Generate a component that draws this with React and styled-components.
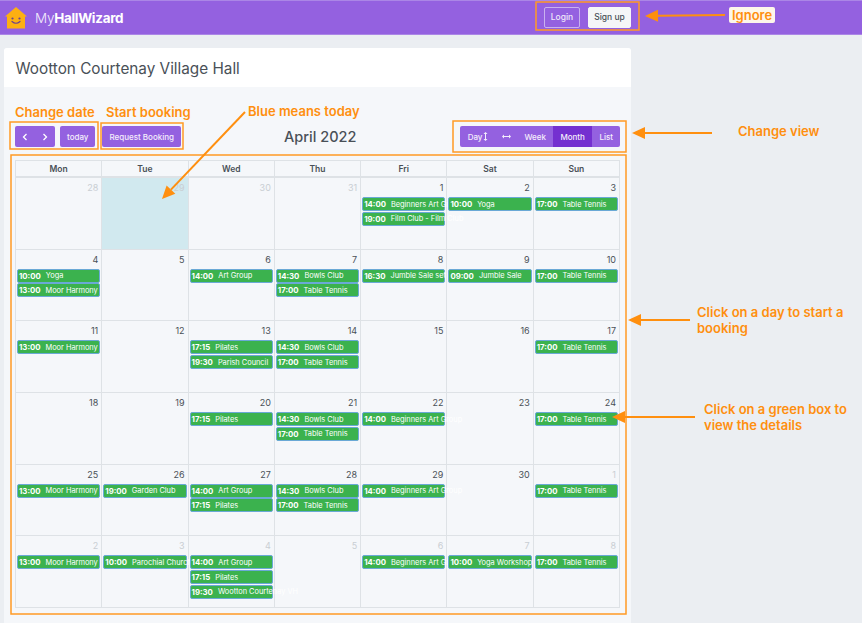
import React from "react";
import styled, { createGlobalStyle } from "styled-components";

const GlobalStyle = createGlobalStyle`
  html, body {
    margin: 0;
    height: 100%;
    overflow: hidden;
    background: #ebeef2;
    font-family: Inter, "Liberation Sans", sans-serif;
  }
`;

const Page = styled.div`
  position: relative;
  width: 862px;
  height: 623px;
  overflow: hidden;
`;

const Navbar = styled.header`
  box-sizing: border-box;
  height: 35px;
  display: flex;
  align-items: center;
  background: #9461e0;
  border-top: 1px solid #ab86e6;
  border-bottom: 1px solid #ab86e6;
  padding: 0 0 0 5px;
`;

const Brand = styled.div`
  display: flex;
  align-items: center;
  gap: 8px;
  font-size: 13.5px;
  letter-spacing: -0.3px;
  color: #f3ecfc;
  font-weight: 300;
  b {
    font-weight: 700;
    color: #fff;
  }
`;

const NavActions = styled.div`
  margin: 0 231px 1px auto;
  display: flex;
  gap: 8px;
`;

const NavButton = styled.div`
  box-sizing: border-box;
  height: 21px;
  display: flex;
  align-items: center;
  justify-content: center;
  width: ${(p) => (p.$solid ? "43px" : "36px")};
  border-radius: 2px;
  font-size: 8.5px;
  font-weight: 500;
  color: ${(p) => (p.$solid ? "#495057" : "#efe8fa")};
  background: ${(p) => (p.$solid ? "#f5f6f8" : "transparent")};
  border: 1px solid ${(p) => (p.$solid ? "#f5f6f8" : "#c9b2ef")};
`;

const Card = styled.main`
  margin: 13px 0 0 4px;
  width: 627px;
  height: 575px;
  background: #f5f7fa;
  border-radius: 3px 3px 0 0;
  overflow: hidden;
`;

const CardHeader = styled.div`
  box-sizing: border-box;
  height: 39px;
  background: #fff;
  padding: 2px 11.5px 0;
  display: flex;
  align-items: center;
  font-size: 15.3px;
  color: #495057;
`;

const CardBody = styled.div`
  padding: 39px 11px 0;
`;

const Toolbar = styled.div`
  position: relative;
  height: 21px;
  display: flex;
  align-items: center;
  gap: 5px;
  margin-bottom: 13px;
`;

const BtnGroup = styled.div`
  display: flex;
  border-radius: 2px;
  overflow: hidden;
  margin-left: ${(p) => (p.$right ? "auto" : 0)};
`;

const ToolButton = styled.div`
  box-sizing: border-box;
  height: 21px;
  padding: 0 ${(p) => p.$pad || 8}px;
  display: flex;
  align-items: center;
  justify-content: center;
  gap: 1px;
  font-size: 8px;
  font-weight: 500;
  color: #f4eefc;
  background: ${(p) => (p.$active ? "#7430d0" : "#9461e0")};
  border-radius: ${(p) => (p.$square ? 0 : "2px")};
`;

const BookingButton = styled(ToolButton)`
  margin-left: 2px;
`;

const MonthTitle = styled.h2`
  position: absolute;
  left: 269px;
  top: 0;
  margin: 0;
  line-height: 21px;
  font-size: 14.5px;
  font-weight: 500;
  color: #495057;
`;

const Calendar = styled.div`
  width: 605px;
  border-left: 1px solid #dee2e6;
  border-top: 1px solid #dee2e6;
  box-sizing: border-box;
  display: grid;
  grid-template-columns: repeat(7, 1fr);
  grid-template-rows: 17px repeat(6, 71.7px);
`;

const DayHead = styled.div`
  display: flex;
  align-items: center;
  justify-content: center;
  font-size: 8.5px;
  font-weight: 600;
  color: #495057;
  border-right: 1px solid #dee2e6;
  border-bottom: 2px solid #dee2e6;
`;

const Cell = styled.div`
  min-width: 0;
  padding: 5px 1px 0 1px;
  background: ${(p) => (p.$today ? "#d1e9ef" : "transparent")};
  border-right: 1px solid #dee2e6;
  border-bottom: 1px solid #dee2e6;
`;

const DayNum = styled.div`
  height: 12px;
  line-height: 10px;
  margin-bottom: 2px;
  padding-right: 2px;
  text-align: right;
  font-size: 9px;
  color: ${(p) => (p.$muted ? "#c9ced3" : "#495057")};
`;

const Event = styled.div`
  box-sizing: border-box;
  height: 14px;
  margin-bottom: 0.7px;
  padding-left: 1px;
  display: flex;
  align-items: center;
  gap: 5px;
  white-space: nowrap;
  font-size: 7.4px;
  color: #fff;
  background: #3bb24e;
  border: 1px solid #6aa9d6;
  border-radius: 2px;
  position: relative;
  b {
    font-weight: 700;
    font-size: 7.8px;
  }
`;

const Overlay = styled.svg`
  position: absolute;
  left: 0;
  top: 0;
  pointer-events: none;
`;

const Note = styled.div`
  position: absolute;
  left: ${(p) => p.$x}px;
  top: ${(p) => p.$y}px;
  width: ${(p) => (p.$w ? `${p.$w}px` : "auto")};
  font-size: 13px;
  line-height: 16px;
  font-weight: 600;
  color: #ff8f0f;
  white-space: ${(p) => (p.$w ? "normal" : "nowrap")};
  background: ${(p) => (p.$label ? "#fdf6ea" : "transparent")};
  padding: ${(p) => (p.$label ? "0 3px" : 0)};
  border-radius: 2px;
`;

const dayNames = ["Mon", "Tue", "Wed", "Thu", "Fri", "Sat", "Sun"];

const art = ["14:00", "Art Group"];
const beginners = ["14:00", "Beginners Art Group"];
const bowls = ["14:30", "Bowls Club"];
const moor = ["13:00", "Moor Harmony"];
const pilates = ["17:15", "Pilates"];
const tennis = ["17:00", "Table Tennis"];

const weeks = [
  [
    { n: 28, muted: true },
    { n: 29, muted: true, today: true },
    { n: 30, muted: true },
    { n: 31, muted: true },
    { n: 1, ev: [beginners, ["19:00", "Film Club - Film Club"]] },
    { n: 2, ev: [["10:00", "Yoga"]] },
    { n: 3, ev: [tennis] },
  ],
  [
    { n: 4, ev: [["10:00", "Yoga"], moor] },
    { n: 5 },
    { n: 6, ev: [art] },
    { n: 7, ev: [bowls, tennis] },
    { n: 8, ev: [["16:30", "Jumble Sale set up"]] },
    { n: 9, ev: [["09:00", "Jumble Sale"]] },
    { n: 10, ev: [tennis] },
  ],
  [
    { n: 11, ev: [moor] },
    { n: 12 },
    { n: 13, ev: [pilates, ["19:30", "Parish Council"]] },
    { n: 14, ev: [bowls, tennis] },
    { n: 15 },
    { n: 16 },
    { n: 17, ev: [tennis] },
  ],
  [
    { n: 18 },
    { n: 19 },
    { n: 20, ev: [pilates] },
    { n: 21, ev: [bowls, tennis] },
    { n: 22, ev: [beginners] },
    { n: 23 },
    { n: 24, ev: [tennis] },
  ],
  [
    { n: 25, ev: [moor] },
    { n: 26, ev: [["19:00", "Garden Club"]] },
    { n: 27, ev: [art, pilates] },
    { n: 28, ev: [bowls, tennis] },
    { n: 29, ev: [beginners] },
    { n: 30 },
    { n: 1, muted: true, ev: [tennis] },
  ],
  [
    { n: 2, muted: true, ev: [moor] },
    { n: 3, muted: true, ev: [["10:00", "Parochial Church Council"]] },
    { n: 4, muted: true, ev: [art, pilates, ["19:30", "Wootton Courtenay VH"]] },
    { n: 5, muted: true },
    { n: 6, muted: true, ev: [beginners] },
    { n: 7, muted: true, ev: [["10:00", "Yoga Workshop"]] },
    { n: 8, muted: true, ev: [tennis] },
  ],
];

const HouseLogo = () => (
  <svg width="22" height="22" viewBox="0 0 22 22">
    <path d="M11 0 L22 9.5 L20 9.5 L20 21.5 L2 21.5 L2 9.5 L0 9.5 Z" fill="#fdb012" />
    <circle cx="7.5" cy="11.5" r="1.1" fill="#6b3f8f" />
    <circle cx="14.5" cy="11.5" r="1.1" fill="#6b3f8f" />
    <path d="M7 14.5 Q11 18 15 14.5" fill="none" stroke="#6b3f8f" strokeWidth="1.2" strokeLinecap="round" />
  </svg>
);

const Chevron = ({ left }) => (
  <svg width="6" height="8" viewBox="0 0 6 8">
    <path d={left ? "M4.5 1 L1.5 4 L4.5 7" : "M1.5 1 L4.5 4 L1.5 7"} fill="none" stroke="#fff" strokeWidth="1.3" />
  </svg>
);

const ArrowV = () => (
  <svg width="5" height="9" viewBox="0 0 5 9">
    <path d="M2.5 0 L4.5 2 L3 2 L3 7 L4.5 7 L2.5 9 L0.5 7 L2 7 L2 2 L0.5 2 Z" fill="#f4eefc" />
  </svg>
);

const ArrowH = () => (
  <svg width="9" height="5" viewBox="0 0 9 5">
    <path d="M0 2.5 L2 0.5 L2 2 L7 2 L7 0.5 L9 2.5 L7 4.5 L7 3 L2 3 L2 4.5 Z" fill="#f4eefc" />
  </svg>
);

const boxes = [
  [536, 2, 103, 28],
  [10, 122, 88, 27],
  [101, 123, 82, 26],
  [453, 121, 173, 31],
  [11, 155, 615, 459],
];

// x1, y1 is the tail, x2, y2 the tip
const arrows = [
  [725, 15, 645, 16],
  [712, 133, 632, 133],
  [245, 112, 162, 199],
  [690, 320, 628, 320],
  [695, 417, 612, 417],
];

const Arrow = ({ from }) => {
  const [x1, y1, x2, y2] = from;
  const a = Math.atan2(y2 - y1, x2 - x1);
  const len = 13;
  const wing = 6;
  const bx = x2 - Math.cos(a) * len;
  const by = y2 - Math.sin(a) * len;
  const px = -Math.sin(a) * wing;
  const py = Math.cos(a) * wing;
  return (
    <g>
      <line x1={x1} y1={y1} x2={bx} y2={by} stroke="#ff8f0f" strokeWidth="2" />
      <polygon points={`${x2},${y2} ${bx + px},${by + py} ${bx - px},${by - py}`} fill="#ff8f0f" />
    </g>
  );
};

const App = () => (
  <Page>
    <GlobalStyle />
    <Navbar>
      <Brand>
        <HouseLogo />
        <span>
          My<b>HallWizard</b>
        </span>
      </Brand>
      <NavActions>
        <NavButton>Login</NavButton>
        <NavButton $solid>Sign up</NavButton>
      </NavActions>
    </Navbar>
    <Card>
      <CardHeader>Wootton Courtenay Village Hall</CardHeader>
      <CardBody>
        <Toolbar>
          <BtnGroup>
            <ToolButton $square $pad={7}>
              <Chevron left />
            </ToolButton>
            <ToolButton $square $pad={7}>
              <Chevron />
            </ToolButton>
          </BtnGroup>
          <ToolButton $pad={7}>today</ToolButton>
          <BookingButton $pad={7}>Request Booking</BookingButton>
          <MonthTitle>April 2022</MonthTitle>
          <BtnGroup $right>
            <ToolButton $square>
              Day
              <ArrowV />
            </ToolButton>
            <ToolButton $square $pad={6}>
              <ArrowH />
            </ToolButton>
            <ToolButton $square $pad={7}>Week</ToolButton>
            <ToolButton $square $active $pad={7.5}>Month</ToolButton>
            <ToolButton $square $pad={7}>List</ToolButton>
          </BtnGroup>
        </Toolbar>
        <Calendar>
          {dayNames.map((d) => (
            <DayHead key={d}>{d}</DayHead>
          ))}
          {weeks.flat().map((day, i) => (
            <Cell key={i} $today={day.today}>
              <DayNum $muted={day.muted}>{day.n}</DayNum>
              {(day.ev || []).map(([time, title]) => (
                <Event key={time + title}>
                  <b>{time}</b>
                  <span>{title}</span>
                </Event>
              ))}
            </Cell>
          ))}
        </Calendar>
      </CardBody>
    </Card>

    <Overlay width="862" height="623">
      {boxes.map(([x, y, w, h]) => (
        <rect key={`${x}-${y}`} x={x} y={y} width={w} height={h} fill="none" stroke="#ff9a24" strokeWidth="1.5" />
      ))}
      {arrows.map((a) => (
        <Arrow key={a.join()} from={a} />
      ))}
    </Overlay>
    <Note $label $x={729} $y={7}>Ignore</Note>
    <Note $x={15} $y={104}>Change date</Note>
    <Note $x={106} $y={104}>Start booking</Note>
    <Note $x={248} $y={103}>Blue means today</Note>
    <Note $x={738} $y={123}>Change view</Note>
    <Note $x={697} $y={304} $w={160}>Click on a day to start a booking</Note>
    <Note $x={704} $y={401} $w={150}>Click on a green box to view the details</Note>
  </Page>
);

export default App;
